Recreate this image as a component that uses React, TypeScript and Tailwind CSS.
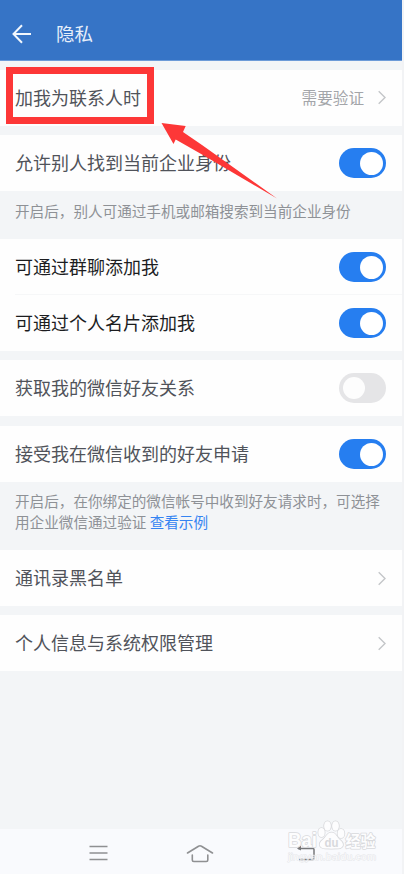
import type { ReactNode } from "react";

function Chevron() {
  return (
    <svg width="9" height="15" viewBox="0 0 9 15" fill="none" className="ml-[13px] shrink-0">
      <path d="M1.7 1.3L8 7.5L1.7 13.7" stroke="#c4c6c9" strokeWidth="1.4" />
    </svg>
  );
}

function Toggle({ on = false }: { on?: boolean }) {
  return (
    <button
      type="button"
      role="switch"
      aria-checked={on}
      className={
        on
          ? "flex h-[30px] w-[47px] items-center justify-end rounded-full bg-[#267ef0] pr-[3px]"
          : "flex h-[30px] w-[47px] items-center justify-start rounded-full bg-[#e5e5e7] pl-[3.5px]"
      }
    >
      <span
        className={
          on
            ? "size-[23px] rounded-full bg-white"
            : "size-[22px] rounded-full bg-[#fdfdfd]"
        }
      />
    </button>
  );
}

function Row({
  label,
  dark = false,
  children,
}: {
  label: string;
  dark?: boolean;
  children: ReactNode;
}) {
  return (
    <div className="flex h-14 shrink-0 items-center justify-between bg-[#fefefe] pr-4 pl-[15px]">
      <span
        className={
          dark
            ? "pb-px text-[18px] whitespace-nowrap text-[#1c1d1f]"
            : "pb-px text-[18px] whitespace-nowrap text-[#50535a]"
        }
      >
        {label}
      </span>
      <div className="flex items-center">{children}</div>
    </div>
  );
}

function Watermark() {
  return (
    <svg
      width="96"
      height="50"
      viewBox="0 0 96 50"
      className="absolute right-[22px] bottom-[4px]"
      fill="#fdfdfe"
      stroke="#d8d9dc"
      strokeWidth="1.6"
      strokeLinejoin="round"
      paintOrder="stroke"
      fontFamily="'Liberation Sans', 'Noto Sans CJK SC', sans-serif"
      fontWeight="700"
    >
      <text x="2" y="27" fontSize="20.5" textLength="29" lengthAdjust="spacingAndGlyphs">
        Bai
      </text>
      <ellipse cx="35.5" cy="12.5" rx="3.2" ry="4.5" />
      <ellipse cx="41.5" cy="6" rx="3.4" ry="4.8" />
      <ellipse cx="49.5" cy="6" rx="3.4" ry="4.8" />
      <ellipse cx="55" cy="13.5" rx="3.4" ry="4.5" />
      <path d="M45.5 12.5C41 12.5 40 17.5 36.5 20C32 23.5 33 28 39 28.5C43 28.7 48 28.7 52 28.5C58 28 58.5 23.5 54 20C50.5 17 50 12.5 45.5 12.5Z" />
      <text
        x="38.5"
        y="26.5"
        fontSize="13"
        fill="#d8d9dc"
        stroke="none"
        textLength="14"
        lengthAdjust="spacingAndGlyphs"
      >
        du
      </text>
      <text x="59.5" y="26.5" fontSize="15.5" textLength="30" lengthAdjust="spacingAndGlyphs">
        经验
      </text>
      <text
        x="2"
        y="39.5"
        fontSize="9.5"
        fontWeight="400"
        strokeWidth="0.8"
        opacity="0.7"
        textLength="88"
        lengthAdjust="spacingAndGlyphs"
      >
        jingyan.baidu.com
      </text>
    </svg>
  );
}

export default function App() {
  return (
    <div className="relative h-[874px] w-[404px] overflow-hidden bg-[#f2f3f5] pr-0.5 font-['Noto_Sans_CJK_SC',sans-serif]">
      <div className="flex h-full flex-col bg-[#f3f5f7]">
        <header className="flex h-[61px] shrink-0 items-center border-b border-[#6d9bd8] bg-[#3674c6] pt-[7px] pl-3">
          <svg width="20" height="20" viewBox="0 0 20 20" fill="none">
            <path
              d="M10 1.2L1.5 10L10 18.8M1.5 10H19"
              stroke="#f2f7fd"
              strokeWidth="2"
            />
          </svg>
          <h1 className="ml-6 text-[18.5px] text-[#e6effa]">隐私</h1>
        </header>

        <main className="flex flex-1 flex-col">
          <div className="mt-[9px]">
            <Row label="加我为联系人时">
              <span className="text-[15.6px] text-[#a3a5a9]">需要验证</span>
              <Chevron />
            </Row>
          </div>

          <div className="mt-[9px]">
            <Row label="允许别人找到当前企业身份">
              <Toggle on />
            </Row>
          </div>
          <p className="h-12 pt-[9px] pl-[15px] text-[14.6px] leading-[21px] whitespace-nowrap text-[#8e9196]">
            开启后，别人可通过手机或邮箱搜索到当前企业身份
          </p>

          <div className="relative">
            <Row label="可通过群聊添加我" dark>
              <Toggle on />
            </Row>
            <div className="absolute top-[55px] right-0 left-[15px] h-px bg-[#f6f7f8]" />
            <Row label="可通过个人名片添加我" dark>
              <Toggle on />
            </Row>
          </div>

          <div className="mt-[9px]">
            <Row label="获取我的微信好友关系">
              <Toggle />
            </Row>
          </div>

          <div className="mt-2.5">
            <Row label="接受我在微信收到的好友申请">
              <Toggle on />
            </Row>
          </div>
          <p className="h-[68px] pt-2 pl-[15px] text-[14.6px] leading-[21px] whitespace-nowrap text-[#8e9196]">
            开启后，在你绑定的微信帐号中收到好友请求时，可选择
            <br />
            用企业微信通过验证{" "}
            <a className="text-[#3584f2]">查看示例</a>
          </p>

          <Row label="通讯录黑名单">
            <Chevron />
          </Row>
          <div className="mt-[9px]">
            <Row label="个人信息与系统权限管理">
              <Chevron />
            </Row>
          </div>
        </main>

        {/* System navigation */}
        <nav className="flex h-[45px] shrink-0 items-center bg-[#f9fafd] pt-[3px] pl-[89px]">
          <svg width="19" height="16" viewBox="0 0 19 16" stroke="#8f9092" strokeWidth="1.6">
            <path d="M0.5 1.5H18.5M0.5 8H18.5M0.5 14.5H18.5" />
          </svg>
          <svg
            width="28"
            height="19"
            viewBox="0 0 28 19"
            fill="none"
            stroke="#8f9092"
            strokeWidth="1.6"
            strokeLinecap="round"
            className="ml-[78px]"
          >
            <path d="M1.5 9L12.5 2.2Q14 1.3 15.5 2.2L26.5 9M6.3 11V16Q6.3 17.5 7.8 17.5H20.3Q21.8 17.5 21.8 16V11" />
          </svg>
          <svg
            width="20"
            height="16"
            viewBox="0 0 20 16"
            fill="none"
            stroke="#77787b"
            strokeWidth="1.5"
            className="ml-[82px]"
          >
            <path d="M2 3.5H17Q18 3.5 18 4.5V13.5Q18 14.5 17 14.5H3" />
            <path d="M5 0.5L1 3.5L5 5.5Z" fill="#77787b" stroke="none" />
          </svg>
        </nav>
      </div>

      {/* Callout */}
      <div className="absolute top-[67px] left-[6px] h-[57px] w-[148px] border-7 border-[#fd3737]" />
      <svg
        width="118"
        height="78"
        viewBox="0 0 118 78"
        className="absolute top-[122px] left-[160px]"
      >
        <path
          d="M1.5 1L25.7 4L23 10L42 23L117 76.5L42 32.5L15.7 17.5L13.5 22Z"
          fill="#fd3737"
        />
      </svg>

      <Watermark />
    </div>
  );
}
